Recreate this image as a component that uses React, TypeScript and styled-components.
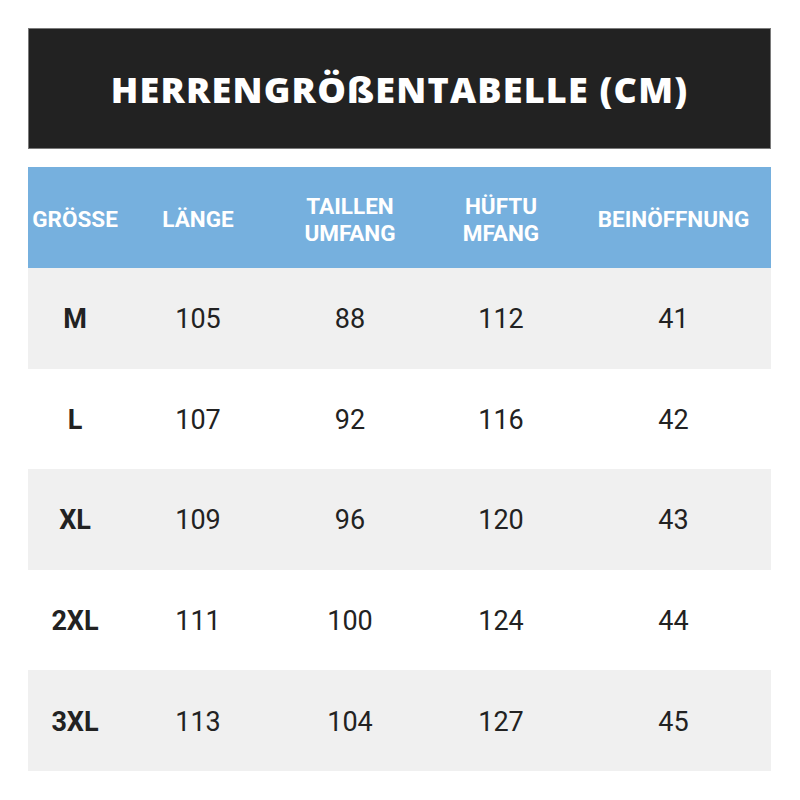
import React from "react";
import styled, { createGlobalStyle } from "styled-components";

const Global = createGlobalStyle`
  html, body { margin: 0; padding: 0; background: #ffffff; }
  body { width: 800px; height: 800px; font-family: Roboto, "Liberation Sans", sans-serif; }
`;

const Page = styled.div`
  width: 800px;
  height: 800px;
  box-sizing: border-box;
  padding: 28px 29px 0 28px;
  display: flex;
  flex-direction: column;
  gap: 18px;
`;

const TitleBar = styled.div`
  height: 121px;
  box-sizing: border-box;
  background: #222222;
  border: 1px solid #7a7a7a;
  display: flex;
  align-items: center;
  justify-content: center;
`;

const Title = styled.h1`
  margin: 0;
  color: #ffffff;
  font-family: "Open Sans", "DejaVu Sans", sans-serif;
  font-weight: 800;
  font-size: 36px;
  letter-spacing: 1.2px;
  padding-top: 2px;
`;

const Table = styled.div`
  display: grid;
  grid-template-columns: 94px 152px 152px 150px 195px;
`;

const HeadCell = styled.div`
  height: 101px;
  background: #76b0de;
  color: #ffffff;
  font-family: Roboto, "Liberation Sans", sans-serif;
  font-weight: 700;
  font-size: 22.5px;
  line-height: 27px;
  display: flex;
  align-items: center;
  justify-content: center;
  text-align: center;
  padding-top: 4px;
  box-sizing: border-box;
`;

const Cell = styled.div<{ $shade: boolean; $bold?: boolean }>`
  height: 100.6px;
  background: ${(p) => (p.$shade ? "#f0f0f0" : "#ffffff")};
  color: #222222;
  font-size: 27px;
  font-weight: ${(p) => (p.$bold ? 700 : 400)};
  display: flex;
  align-items: center;
  justify-content: center;
  padding-top: 2px;
  box-sizing: border-box;
`;

const headers = [
  ["GRÖSSE"],
  ["LÄNGE"],
  ["TAILLEN", "UMFANG"],
  ["HÜFTU", "MFANG"],
  ["BEINÖFFNUNG"],
];

const rows = [
  ["M", "105", "88", "112", "41"],
  ["L", "107", "92", "116", "42"],
  ["XL", "109", "96", "120", "43"],
  ["2XL", "111", "100", "124", "44"],
  ["3XL", "113", "104", "127", "45"],
];

export default function App() {
  return (
    <>
      <Global />
      <Page>
        <TitleBar>
          <Title>HERRENGRÖßENTABELLE (CM)</Title>
        </TitleBar>
        <Table>
          {headers.map((h, i) => (
            <HeadCell key={i}>
              <span>
                {h.map((line, j) => (
                  <React.Fragment key={j}>
                    {j > 0 && <br />}
                    {line}
                  </React.Fragment>
                ))}
              </span>
            </HeadCell>
          ))}
          {rows.map((r, ri) =>
            r.map((v, ci) => (
              <Cell key={`${ri}-${ci}`} $shade={ri % 2 === 0} $bold={ci === 0}>
                {v}
              </Cell>
            ))
          )}
        </Table>
      </Page>
    </>
  );
}
